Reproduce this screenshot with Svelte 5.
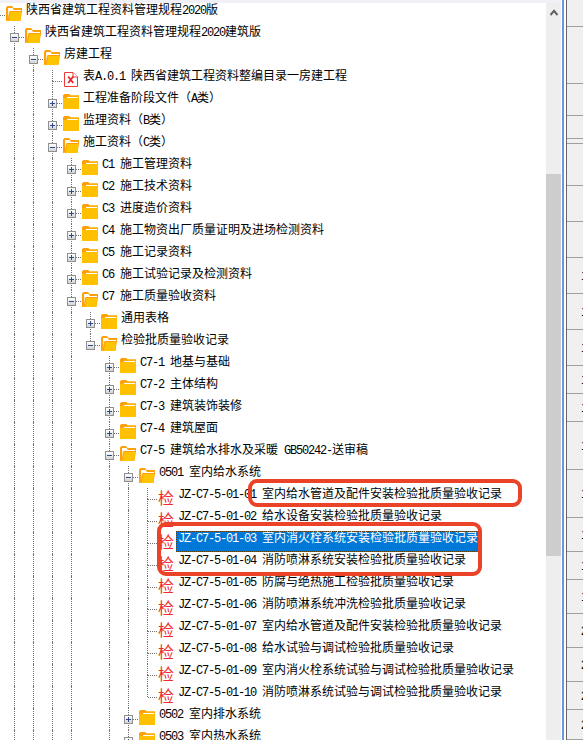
<script>
	// [level, kind, text] - kind: 'open' | 'closed' | 'file' | 'check'
	const rows = [
		[0, 'open', '陕西省建筑工程资料管理规程2020版'],
		[1, 'open', '陕西省建筑工程资料管理规程2020建筑版'],
		[2, 'open', '房建工程'],
		[3, 'file', '表A.0.1 陕西省建筑工程资料整编目录一房建工程'],
		[3, 'closed', '工程准备阶段文件（A类）'],
		[3, 'closed', '监理资料（B类）'],
		[3, 'open', '施工资料（C类）'],
		[4, 'closed', 'C1 施工管理资料'],
		[4, 'closed', 'C2 施工技术资料'],
		[4, 'closed', 'C3 进度造价资料'],
		[4, 'closed', 'C4 施工物资出厂质量证明及进场检测资料'],
		[4, 'closed', 'C5 施工记录资料'],
		[4, 'closed', 'C6 施工试验记录及检测资料'],
		[4, 'open', 'C7 施工质量验收资料'],
		[5, 'closed', '通用表格'],
		[5, 'open', '检验批质量验收记录'],
		[6, 'closed', 'C7-1 地基与基础'],
		[6, 'closed', 'C7-2 主体结构'],
		[6, 'closed', 'C7-3 建筑装饰装修'],
		[6, 'closed', 'C7-4 建筑屋面'],
		[6, 'open', 'C7-5 建筑给水排水及采暖 GB50242-送审稿'],
		[7, 'open', '0501 室内给水系统'],
		[8, 'check', 'JZ-C7-5-01-01 室内给水管道及配件安装检验批质量验收记录'],
		[8, 'check', 'JZ-C7-5-01-02 给水设备安装检验批质量验收记录'],
		[8, 'check', 'JZ-C7-5-01-03 室内消火栓系统安装检验批质量验收记录'],
		[8, 'check', 'JZ-C7-5-01-04 消防喷淋系统安装检验批质量验收记录'],
		[8, 'check', 'JZ-C7-5-01-05 防腐与绝热施工检验批质量验收记录'],
		[8, 'check', 'JZ-C7-5-01-06 消防喷淋系统冲洗检验批质量验收记录'],
		[8, 'check', 'JZ-C7-5-01-07 室内给水管道及配件安装检验批质量验收记录'],
		[8, 'check', 'JZ-C7-5-01-08 给水试验与调试检验批质量验收记录'],
		[8, 'check', 'JZ-C7-5-01-09 室内消火栓系统试验与调试检验批质量验收记录'],
		[8, 'check', 'JZ-C7-5-01-10 消防喷淋系统试验与调试检验批质量验收记录'],
		[7, 'closed', '0502 室内排水系统'],
		[7, 'closed', '0503 室内热水系统']
	];
	const selected = 24;

	// levels whose siblings stop before the bottom of the list
	const closedAtEnd = [0, 5];

	function continues(i, level) {
		for (let j = i + 1; j < rows.length; j++) {
			if (rows[j][0] < level) return false;
			if (rows[j][0] === level) return true;
		}
		return !closedAtEnd.includes(level);
	}

	function guides(i) {
		const out = [];
		for (let k = 0; k < rows[i][0]; k++) out.push(continues(i, k));
		return out;
	}

	// latin runs are half width in the original bitmap font
	function runs(text) {
		return text.split(/([\x20-\x7e]+)/).filter(Boolean).map((t) => ({
			t,
			latin: /^[\x20-\x7e]/.test(t)
		}));
	}

	const edges = [0, 27, 84, 116, 139, 144, 186, 222, 258, 294, 330, 366, 394, 422, 470, 518, 552, 580, 614, 648, 682, 710, 740];
	const cells = edges.slice(1).map((end, i) => ({
		height: end - edges[i],
		digit: edges[i] < 258 ? '' : edges[i] < 614 ? '1' : '2'
	}));
</script>

<div class="window">
	<div class="left">
		<div class="strip"></div>
		<div class="body">
			<div class="tree">
				{#each rows as row, i}
					<div class="row">
						{#each guides(i) as on}
							<span class="guide" class:on></span>
						{/each}
						<span class="elbow">
							{#if row[0] > 0}<span class="up"></span>{/if}
							{#if continues(i, row[0])}<span class="down"></span>{/if}
							<span class="dash"></span>
							{#if row[1] === 'open' || row[1] === 'closed'}
								<span class="box" class:plus={row[1] === 'closed'}></span>
							{/if}
						</span>
						{#if row[1] === 'open'}
							<svg class="icon" width="16" height="15" viewBox="0 0 16 15">
								<path d="M0 1.5 1.5 0H6l1.5 2H16v3H4L1.5 15H0z" fill="#ff9f0a" />
								<path d="M2 2h4.5L8 4h7v1H4.5L2.5 12z" fill="#fff" />
								<path d="M3.5 5H16l-1.5 10H1.5z" fill="#ff9f0a" />
								<path d="M4.5 6H15.5L14 15H2.5z" fill="#ffc400" />
							</svg>
						{:else if row[1] === 'closed'}
							<svg class="icon" width="16" height="15" viewBox="0 0 16 15">
								<path d="M0 1.5 1.5 0H6l1.5 1.5H16V15H0z" fill="#ffc000" />
								<path d="M0 1.5 1.5 0H6l1.5 1.5H16v1H5L3.5 4H0z" fill="#ff9f0a" />
								<path d="M4 3h11v1H4z" fill="#fff" />
							</svg>
						{:else if row[1] === 'file'}
							<svg class="icon" width="16" height="15" viewBox="0 0 16 15">
								<path d="M1.5.5H10L14.5 5v9.5h-13z" fill="#fff" stroke="#ee3a3a" />
								<path d="M10 .5V5h4.5" fill="#fff" stroke="#ee3a3a" />
								<path d="M5.2 4.5l5 6.5M10.2 4.5l-5 6.5" stroke="#e8232a" stroke-width="1.8" fill="none" />
							</svg>
						{:else}
							<span class="check">检</span>
						{/if}
						<span class="label" class:selected={i === selected}>
							{#each runs(row[2]) as run}
								<span class:latin={run.latin}>{run.t}</span>
							{/each}
						</span>
					</div>
				{/each}
			</div>
			<div class="scrollbar">
				<svg class="arrow" width="8" height="7" viewBox="0 0 8 7">
					<path d="M0.5 6 4 1.8 7.5 6" fill="none" stroke="#606060" stroke-width="2" />
				</svg>
				<div class="thumb"></div>
			</div>
		</div>
		<div class="mark one"></div>
		<div class="mark two"></div>
	</div>
	<div class="divider"></div>
	<div class="panel">
		{#each cells as cell}
			<div class="cell" style="height: {cell.height}px">{cell.digit}</div>
		{/each}
	</div>
</div>

<style>
	:global(body) {
		overflow: hidden;
		background: #fff;
	}

	.window {
		display: flex;
		width: 583px;
		height: 740px;
		overflow: hidden;
		font-family: 'Noto Sans CJK SC', 'Liberation Sans', sans-serif;
		font-size: 12px;
		color: #000;
	}

	.left {
		position: relative;
		display: flex;
		flex-direction: column;
		width: 561px;
		flex: none;
	}

	.strip {
		height: 3px;
		flex: none;
		background: #f0f0f6;
	}

	.body {
		display: flex;
		flex: 1;
		min-height: 0;
	}

	.tree {
		width: 546px;
		flex: none;
		padding-top: 1px;
	}

	.row {
		display: flex;
		align-items: flex-start;
		height: 22px;
		margin-left: -15px;
		white-space: nowrap;
	}

	.guide {
		flex: none;
		box-sizing: border-box;
		width: 9px;
		height: 22px;
		margin-left: 10px;
		border-left: 1px dotted transparent;
	}

	.guide.on {
		border-left-color: #707070;
	}

	.elbow {
		position: relative;
		flex: none;
		width: 19px;
		height: 22px;
	}

	.up,
	.down {
		position: absolute;
		left: 10px;
		height: 11px;
		border-left: 1px dotted #707070;
	}

	.up {
		top: 0;
	}

	.down {
		top: 11px;
	}

	.dash {
		position: absolute;
		left: 11px;
		top: 11px;
		width: 9px;
		border-top: 1px dotted #707070;
	}

	.box {
		position: absolute;
		left: 6px;
		top: 7px;
		width: 9px;
		height: 9px;
		box-sizing: border-box;
		border: 1px solid #8f8f8f;
		background: linear-gradient(#fff, #d4d4d4);
	}

	.box::before {
		content: '';
		position: absolute;
		left: 1px;
		top: 3px;
		width: 5px;
		height: 1px;
		background: #2f4a8c;
	}

	.box.plus::after {
		content: '';
		position: absolute;
		left: 3px;
		top: 1px;
		width: 1px;
		height: 5px;
		background: #2f4a8c;
	}

	.icon {
		flex: none;
		margin: 2px 0 0 2px;
	}

	.check {
		flex: none;
		width: 16px;
		margin: 2px 0 0 2px;
		font-size: 16px;
		line-height: 15px;
		color: #f02a2a;
	}

	.label {
		flex: none;
		height: 21px;
		margin: -1px 0 0 2px;
		padding: 0 1px 0 2px;
		box-sizing: border-box;
		line-height: 11px;
	}

	.label.selected {
		background: #0078d7;
		color: #fff;
		outline: 1px dotted #5a3d10;
		outline-offset: -1px;
	}

	.latin {
		font-family: 'Liberation Mono', monospace;
		font-size: 12px;
		letter-spacing: -1.2px;
		white-space: pre;
	}

	.scrollbar {
		display: flex;
		flex-direction: column;
		width: 15px;
		flex: none;
		background: #eee;
	}

	.arrow {
		margin: 6px 0 0 4px;
		flex: none;
	}

	.thumb {
		height: 382px;
		margin-top: 158px;
		background: #cdcdcd;
	}

	.mark {
		position: absolute;
		box-sizing: border-box;
		border: 4px solid #ea4327;
		border-radius: 9px;
	}

	.mark.one {
		left: 248px;
		top: 479px;
		width: 274px;
		height: 28px;
	}

	.mark.two {
		left: 157px;
		top: 522px;
		width: 325px;
		height: 54px;
	}

	.divider {
		flex: none;
		width: 6px;
		box-sizing: border-box;
		border-left: 1px solid #fff;
		border-right: 1px solid #666;
		background: linear-gradient(to right, #6a98dc 2px, #fff 2px);
	}

	.panel {
		flex: 1;
		min-width: 0;
		overflow: hidden;
		background: #f0f0f0;
	}

	.cell {
		display: flex;
		align-items: center;
		box-sizing: border-box;
		padding-left: 14px;
		border-bottom: 1px solid #a0a0a0;
		font-family: 'Liberation Sans', sans-serif;
		white-space: nowrap;
	}
</style>
